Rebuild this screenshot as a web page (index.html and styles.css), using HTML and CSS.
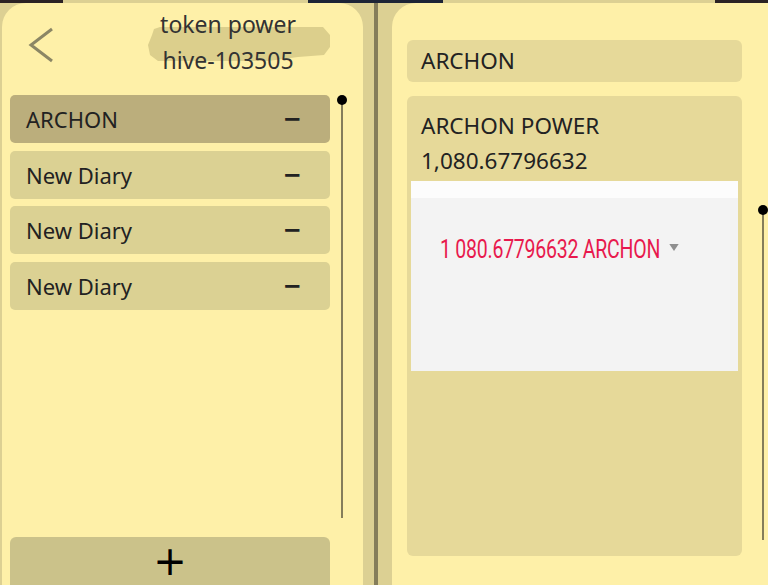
FILE: index.html
```html
<!DOCTYPE html>
<html lang="en">
<head>
    <meta charset="UTF-8">
    <meta name="viewport" content="width=device-width, initial-scale=1.0">
    <title>token power</title>
    <link rel="stylesheet" href="styles.css">
</head>
<body>
    <div class="topbar"></div>
    <div class="screen">
        <!-- Token list -->
        <section class="panel panel-left">
            <header class="nav">
                <svg class="back" width="26" height="36" viewBox="0 0 26 36">
                    <polyline points="24,2 3,18 24,34" fill="none" stroke="#8b8665" stroke-width="3"/>
                </svg>
                <div class="title">
                    <svg class="title-blob" width="184" height="38" viewBox="0 0 184 38">
                        <polygon points="6,4 12,2 175,2 182,10 182,22 176,30 150,32 120,36 10,36 2,30 0,20 4,10" fill="#dccf8c"/>
                    </svg>
                    <div class="title-line">token power</div>
                    <div class="title-line">hive-103505</div>
                </div>
            </header>

            <div class="list-area">
                <ul class="token-list">
                    <li class="token active"><span>ARCHON</span><span class="minus">&minus;</span></li>
                    <li class="token"><span>New Diary</span><span class="minus">&minus;</span></li>
                    <li class="token"><span>New Diary</span><span class="minus">&minus;</span></li>
                    <li class="token"><span>New Diary</span><span class="minus">&minus;</span></li>
                </ul>
                <div class="scroll"><span class="knob"></span></div>
            </div>

            <button class="add-button">+</button>
        </section>

        <div class="divider"><span class="rule"></span></div>

        <!-- Token detail -->
        <section class="panel panel-right">
            <div class="detail">
                <div class="box box-name">ARCHON</div>
                <div class="box box-card">
                    <div class="power-label">ARCHON POWER</div>
                    <div class="power-value">1,080.67796632</div>
                    <div class="picker">
                        <div class="picker-top"></div>
                        <div class="picker-body">
                            <span class="amount">1 080.67796632 ARCHON<span class="caret"></span></span>
                        </div>
                    </div>
                </div>
            </div>
            <div class="scroll scroll-right"><span class="knob"></span></div>
        </section>
    </div>
</body>
</html>
```

FILE: styles.css
```css
* {
    box-sizing: border-box;
}
body {
    margin: 0;
    background-color: #dcd093;
    font-family: "Noto Sans", "Open Sans", sans-serif;
    color: #222;
    overflow: hidden;
    width: 768px;
    height: 585px;
}
.topbar {
    height: 3px;
    background: linear-gradient(to right,
        #2b2224 0, #2b2224 63px,
        #dcd093 63px, #dcd093 308px,
        #1d2436 308px, #1d2436 443px,
        #dcd093 443px, #dcd093 715px,
        #2b2224 715px);
}
.screen {
    display: flex;
    height: 600px;
}
.panel {
    flex-shrink: 0;
    background-color: #fef0a8;
    border-radius: 24px;
    height: 610px;
}
.panel-left {
    width: 361px;
    margin-left: 2px;
    display: flex;
    flex-direction: column;
}
.nav {
    display: flex;
    height: 92px;
}
.back {
    margin: 24px 0 0 26px;
}
.title {
    position: relative;
    margin-left: 99px;
    padding-top: 3px;
    width: 150px;
    text-align: center;
    font-size: 23px;
    line-height: 36px;
    color: #333;
}
.title-line {
    position: relative;
}
.title-blob {
    position: absolute;
    left: -5px;
    top: 22px;
}
.list-area {
    display: flex;
    flex: 0 0 423px;
}
.token-list {
    list-style: none;
    margin: 0;
    padding: 0 0 0 8px;
    width: 328px;
    flex-shrink: 0;
}
.token {
    display: flex;
    justify-content: space-between;
    align-items: center;
    height: 48px;
    margin-bottom: 7.5px;
    padding: 0 28px 0 16px;
    background-color: #dbd193;
    border-radius: 5px;
    font-size: 22px;
}
.token.active {
    background-color: #bbae7c;
}
.minus {
    font-family: "DejaVu Sans", sans-serif;
    font-size: 24px;
    font-weight: bold;
    transform: scaleX(0.95);
}
.scroll {
    position: relative;
    flex-shrink: 0;
    width: 2px;
    margin: 5px 0 0 11px;
    height: 418px;
    background-color: #857d5a;
}
.knob {
    position: absolute;
    left: -4px;
    top: -5px;
    width: 10px;
    height: 10px;
    border-radius: 50%;
    background-color: #000;
}
.add-button {
    margin: 19px 0 0 8px;
    width: 320px;
    height: 60px;
    border: none;
    border-radius: 6px;
    background-color: #cbc28a;
    font-family: "DejaVu Sans", sans-serif;
    font-size: 40px;
    line-height: 36px;
    padding: 4px 0 16px;
    color: #000;
}
.divider {
    display: flex;
    flex-shrink: 0;
    justify-content: center;
    width: 29px;
}
.rule {
    width: 4px;
    margin-left: -3px;
    background-color: #857d5a;
}
.panel-right {
    width: 400px;
    display: flex;
}
.detail {
    width: 350px;
    padding: 37px 0 0 15px;
}
.box {
    background-color: #e6d999;
    border-radius: 6px;
}
.box-name {
    height: 42px;
    line-height: 42px;
    padding-left: 14px;
    font-size: 22.5px;
    margin-bottom: 14px;
}
.box-card {
    height: 460px;
    padding: 12px 4px 0;
    font-size: 22.5px;
}
.power-label,
.power-value {
    padding-left: 10px;
    line-height: 35px;
}
.picker {
    margin-top: 3px;
    height: 190px;
    background-color: #f3f3f3;
}
.picker-top {
    height: 17px;
    background-color: #fcfcfc;
}
.picker-body {
    padding: 36px 0 0 29px;
}
.amount {
    display: inline-block;
    font-family: Roboto, "Noto Sans", sans-serif;
    font-size: 25px;
    letter-spacing: -0.3px;
    color: #e8194d;
    transform: scaleX(0.78);
    transform-origin: left center;
    white-space: nowrap;
}
.caret {
    display: inline-block;
    vertical-align: top;
    margin: 9px 0 0 12px;
    border-left: 6px solid transparent;
    border-right: 6px solid transparent;
    border-top: 7px solid #8f8f8f;
}
.scroll-right {
    margin: 207px 0 0 20px;
    height: 330px;
}
```
